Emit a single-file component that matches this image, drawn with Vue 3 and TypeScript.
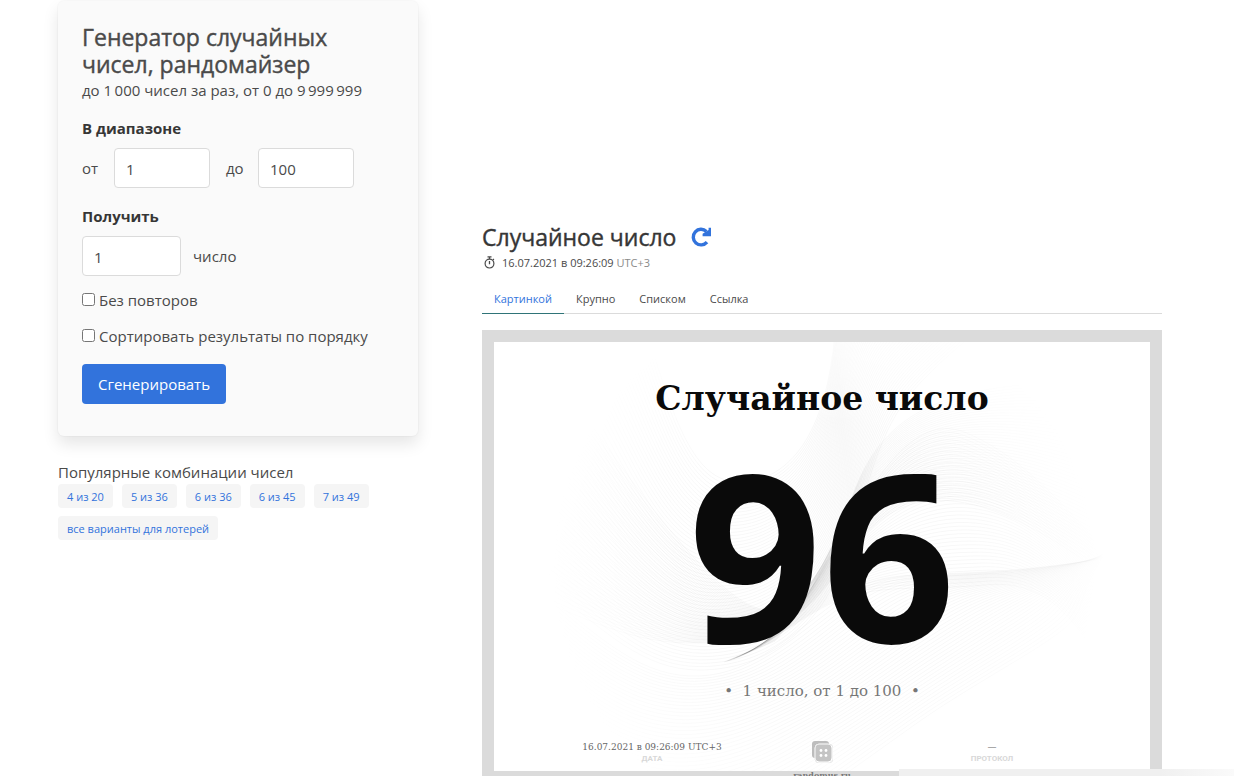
<script setup lang="ts">
import { ref } from 'vue'

const rangeFrom = ref('1')
const rangeTo = ref('100')
const amount = ref('1')
const unique = ref(false)
const sorted = ref(false)

const combos: string[] = ['4 из 20', '5 из 36', '6 из 36', '6 из 45', '7 из 49', 'все варианты для лотерей']
const tabs: string[] = ['Картинкой', 'Крупно', 'Списком', 'Ссылка']
const activeTab = ref('Картинкой')

type Curve = number[]

// Blends two smooth curves into a ribbon of thin lines.
function ribbon(a: Curve, b: Curve, count: number): string {
  let d = ''
  for (let i = 0; i <= count; i++) {
    const t = i / count
    const p = a.map((v, k) => (v + (b[k] - v) * t).toFixed(1))
    d += `M${p[0]} ${p[1]}C${p.slice(2, 8).join(' ')}S${p.slice(8, 12).join(' ')}S${p.slice(12, 16).join(' ')}`
  }
  return d
}

const ribbons: string[] = [
  ribbon(
    [50, 240, 110, 290, 150, 328, 205, 328, 330, 300, 360, 190, 400, 60, 470, 0],
    [150, -20, 180, 80, 200, 140, 245, 140, 330, 100, 340, 0, 350, -60, 360, -90],
    56,
  ),
  ribbon(
    [60, 30, 130, 130, 200, 230, 250, 260, 330, 230, 360, 150, 450, 40, 600, 40],
    [50, 260, 100, 280, 150, 306, 215, 300, 310, 280, 350, 220, 450, 110, 620, 240],
    46,
  ),
  ribbon(
    [50, 250, 110, 300, 150, 336, 205, 334, 300, 290, 350, 254, 440, 245, 620, 215],
    [80, 440, 140, 530, 240, 510, 340, 440, 420, 380, 520, 320, 560, 280, 620, 200],
    44,
  ),
  ribbon(
    [280, 300, 300, 280, 320, 240, 350, 190, 420, 70, 470, 90, 560, 150, 620, 220],
    [230, 320, 270, 310, 310, 270, 350, 256, 440, 248, 490, 243, 580, 260, 620, 350],
    42,
  ),
]
</script>

<template>
  <div class="page">
    <aside class="side">
      <form class="card" @submit.prevent>
        <h1 class="title">Генератор случайных чисел, рандомайзер</h1>
        <p class="lead">до 1&#8201;000 чисел за раз, от 0 до 9&#8201;999&#8201;999</p>

        <h2 class="label">В диапазоне</h2>
        <div class="row">
          <label class="word from" for="from">от</label>
          <input id="from" v-model="rangeFrom" class="input" type="text" />
          <label class="word to" for="to">до</label>
          <input id="to" v-model="rangeTo" class="input" type="text" />
        </div>

        <label class="label" for="amount">Получить</label>
        <div class="row">
          <input id="amount" v-model="amount" class="input amount" type="text" />
          <span class="unit">число</span>
        </div>

        <label class="check"><input v-model="unique" type="checkbox" />Без повторов</label>
        <label class="check"><input v-model="sorted" type="checkbox" />Сортировать результаты по порядку</label>
        <button class="submit" type="submit">Сгенерировать</button>
      </form>

      <p class="popular">Популярные комбинации чисел</p>
      <nav class="tags">
        <a v-for="c in combos" :key="c" class="tag" href="#">{{ c }}</a>
      </nav>
    </aside>

    <main class="result">
      <div class="heading">
        <h2 class="title dark">Случайное число</h2>
        <button class="reload" type="button" aria-label="Обновить">
          <svg viewBox="0 0 20 20" width="20" height="20">
            <path d="M16 15.200A7.800 7.800 0 1 1 15.400 4.400" fill="none" stroke="currentColor" stroke-width="3.4" />
            <path d="M20 0.800v8.400h-8.400V6.800L17.600 3V0.800z" fill="currentColor" />
          </svg>
        </button>
      </div>
      <p class="stamp">
        <svg class="timer" viewBox="0 0 14 14" width="14" height="14" fill="none" stroke="currentColor">
          <circle cx="7.500" cy="7.600" r="4.4" stroke-width="1.2" />
          <path d="M5.500 0.900h4M7.500 1v2M7.500 4.900v3.4M10.900 4l1-1" stroke-width="1.3" />
        </svg>
        <span>16.07.2021 в 09:26:09 <span class="zone">UTC+3</span></span>
      </p>

      <nav class="tabs">
        <a
          v-for="t in tabs"
          :key="t"
          class="tab"
          :class="{ active: t === activeTab }"
          href="#"
          @click.prevent="activeTab = t"
          >{{ t }}</a
        >
      </nav>

      <figure class="frame">
        <div class="sheet">
          <svg class="waves" viewBox="0 0 656 429" preserveAspectRatio="xMidYMid slice" aria-hidden="true">
            <defs>
              <radialGradient id="fade" gradientUnits="userSpaceOnUse" cx="330" cy="225" r="280">
                <stop offset="0.5" stop-color="#fff" />
                <stop offset="1" stop-color="#000" />
              </radialGradient>
              <mask id="round"><rect width="656" height="429" fill="url(#fade)" /></mask>
            </defs>
            <g mask="url(#round)" fill="none" stroke="#000" stroke-opacity="0.06" stroke-width="0.6">
              <path v-for="(d, i) in ribbons" :key="i" :d="d" />
            </g>
          </svg>
          <h3 class="sheet-title">Случайное число</h3>
          <div class="number">96</div>
          <p class="summary">•&nbsp; 1 число, от 1 до 100 &nbsp;•</p>
          <div class="facts">
            <div class="fact"><span>16.07.2021 в 09:26:09 UTC+3</span><small>ДАТА</small></div>
            <div class="fact">
              <svg viewBox="0 0 22 22" width="22" height="22">
                <rect x="1" y="0" width="17" height="17" rx="3" fill="#bdbdbd" />
                <rect x="4" y="3" width="17" height="18" rx="4" fill="#c4c4c4" stroke="#fff" stroke-width="1" />
                <rect x="4" y="3" width="18" height="19" rx="4" fill="none" stroke="#ddd" stroke-width="0.6" />
                <g fill="#fff">
                  <circle cx="10" cy="9.500" r="1.4" />
                  <circle cx="15" cy="9.500" r="1.4" />
                  <circle cx="10" cy="14.500" r="1.4" />
                  <circle cx="15" cy="14.500" r="1.4" />
                </g>
              </svg>
            </div>
            <div class="fact"><span>—</span><small>ПРОТОКОЛ</small></div>
          </div>
        </div>
        <figcaption class="site">randomus.ru</figcaption>
      </figure>
    </main>
    <div class="dock"></div>
  </div>
</template>

<style>
body {
  margin: 0;
  background: #fff;
}
</style>

<style scoped>
.page {
  display: flex;
  gap: 64px;
  height: 100vh;
  overflow: hidden;
  box-sizing: border-box;
  padding: 0 72px 0 58px;
  font: 15px/24px 'Open Sans', 'Noto Sans', sans-serif;
  color: #4a4a4a;
}
.page * {
  box-sizing: border-box;
}
h1,
h2,
h3,
p,
figure {
  margin: 0;
}
a {
  text-decoration: none;
}
.side {
  flex: 0 0 360px;
}
.card {
  margin-top: 1px;
  padding: 23px 24px 32px;
  border-radius: 6px;
  background: #fafafa;
  box-shadow: 0 8px 16px rgba(10, 10, 10, 0.1), 0 0 0 1px rgba(10, 10, 10, 0.02);
}
.title {
  font-size: 23px;
  line-height: 27px;
  font-weight: 500;
  -webkit-text-stroke: 0.4px currentColor;
}
.dark {
  color: #363636;
}
.label {
  display: block;
  margin: 14px 0 8px;
  font-size: 15px;
  line-height: 24px;
  font-weight: 700;
  color: #363636;
}
.row {
  display: flex;
  align-items: center;
  margin-bottom: 16px;
}
.word.from {
  width: 32px;
}
.word.to {
  width: 48px;
  padding-left: 16px;
}
.input {
  width: 96px;
  height: 40px;
  padding: 2px 11px 0;
  border: 1px solid #dbdbdb;
  border-radius: 4px;
  background: #fff;
  font: inherit;
  color: #4a4a4a;
}
.input.amount {
  width: 99px;
}
.unit {
  margin-left: 12px;
}
.row + .check {
  margin-top: -4px;
}
.check {
  display: flex;
  align-items: center;
  margin-bottom: 12px;
}
.check input {
  width: 13px;
  height: 13px;
  margin: 0 4px 2px 0;
}
.submit {
  height: 40px;
  margin-top: 4px;
  padding: 0 16px;
  border: 0;
  border-radius: 4px;
  background: #3273dc;
  color: #fff;
  font: inherit;
}
.popular {
  margin-top: 24px;
}
.tags {
  display: flex;
  flex-wrap: wrap;
  gap: 8px 9px;
}
.tag {
  padding: 1px 9px 0;
  height: 24px;
  border-radius: 4px;
  background: #f5f5f5;
  color: #3273dc;
  font-size: 11px;
}
.result {
  flex: 1;
  min-width: 0;
  padding-top: 224px;
}
.heading {
  display: flex;
  align-items: center;
  gap: 15px;
}
.reload {
  display: flex;
  padding: 0 0 2px;
  border: 0;
  background: none;
  color: #3273dc;
}
.stamp {
  display: flex;
  align-items: center;
  gap: 6px;
  font-size: 11px;
}
.zone {
  color: #8a8a8a;
}
.tabs {
  display: flex;
  margin: 12px 0 16px;
  border-bottom: 1px solid #dbdbdb;
  font-size: 11px;
}
.tab {
  margin-bottom: -1px;
  padding: 0 12px 2px;
  border-bottom: 1px solid transparent;
  color: #4a4a4a;
}
.tab.active {
  border-color: #2f7478;
  color: #3273dc;
}
.frame {
  padding: 12px 12px 16px;
  background: #dbdbdb;
}
.sheet {
  position: relative;
  height: 429px;
  padding-top: 36px;
  background: #fff;
  font-family: 'Roboto Slab', 'DejaVu Serif', serif;
  text-align: center;
}
.waves {
  position: absolute;
  inset: 0;
  width: 100%;
  height: 100%;
}
.sheet-title,
.number,
.summary,
.facts {
  position: relative;
}
.sheet-title {
  font-size: 33px;
  line-height: 42px;
  font-weight: 700;
  color: #0a0a0a;
}
.number {
  margin-top: 18px;
  font: 700 234px/230px 'Open Sans', 'Noto Sans', sans-serif;
  color: #0a0a0a;
}
.summary {
  margin-top: 11px;
  font-size: 15px;
  color: #777;
}
.facts {
  display: grid;
  grid-template-columns: repeat(3, 170px);
  justify-content: center;
  margin-top: 36px;
}
.fact {
  display: flex;
  flex-direction: column;
  align-items: center;
  padding-top: 2px;
  font-size: 9px;
  line-height: 12px;
  color: #666;
  white-space: nowrap;
}
.fact small {
  font: 700 8px/12px Roboto, sans-serif;
  color: #d8d8d8;
}
.site {
  font: 700 8px/9px 'DejaVu Serif', serif;
  text-align: center;
  color: #777;
}
.dock {
  position: fixed;
  right: 0;
  bottom: 0;
  width: 335px;
  height: 7px;
  background: linear-gradient(90deg, #f0f0f0 78%, #fafafa);
}
</style>
